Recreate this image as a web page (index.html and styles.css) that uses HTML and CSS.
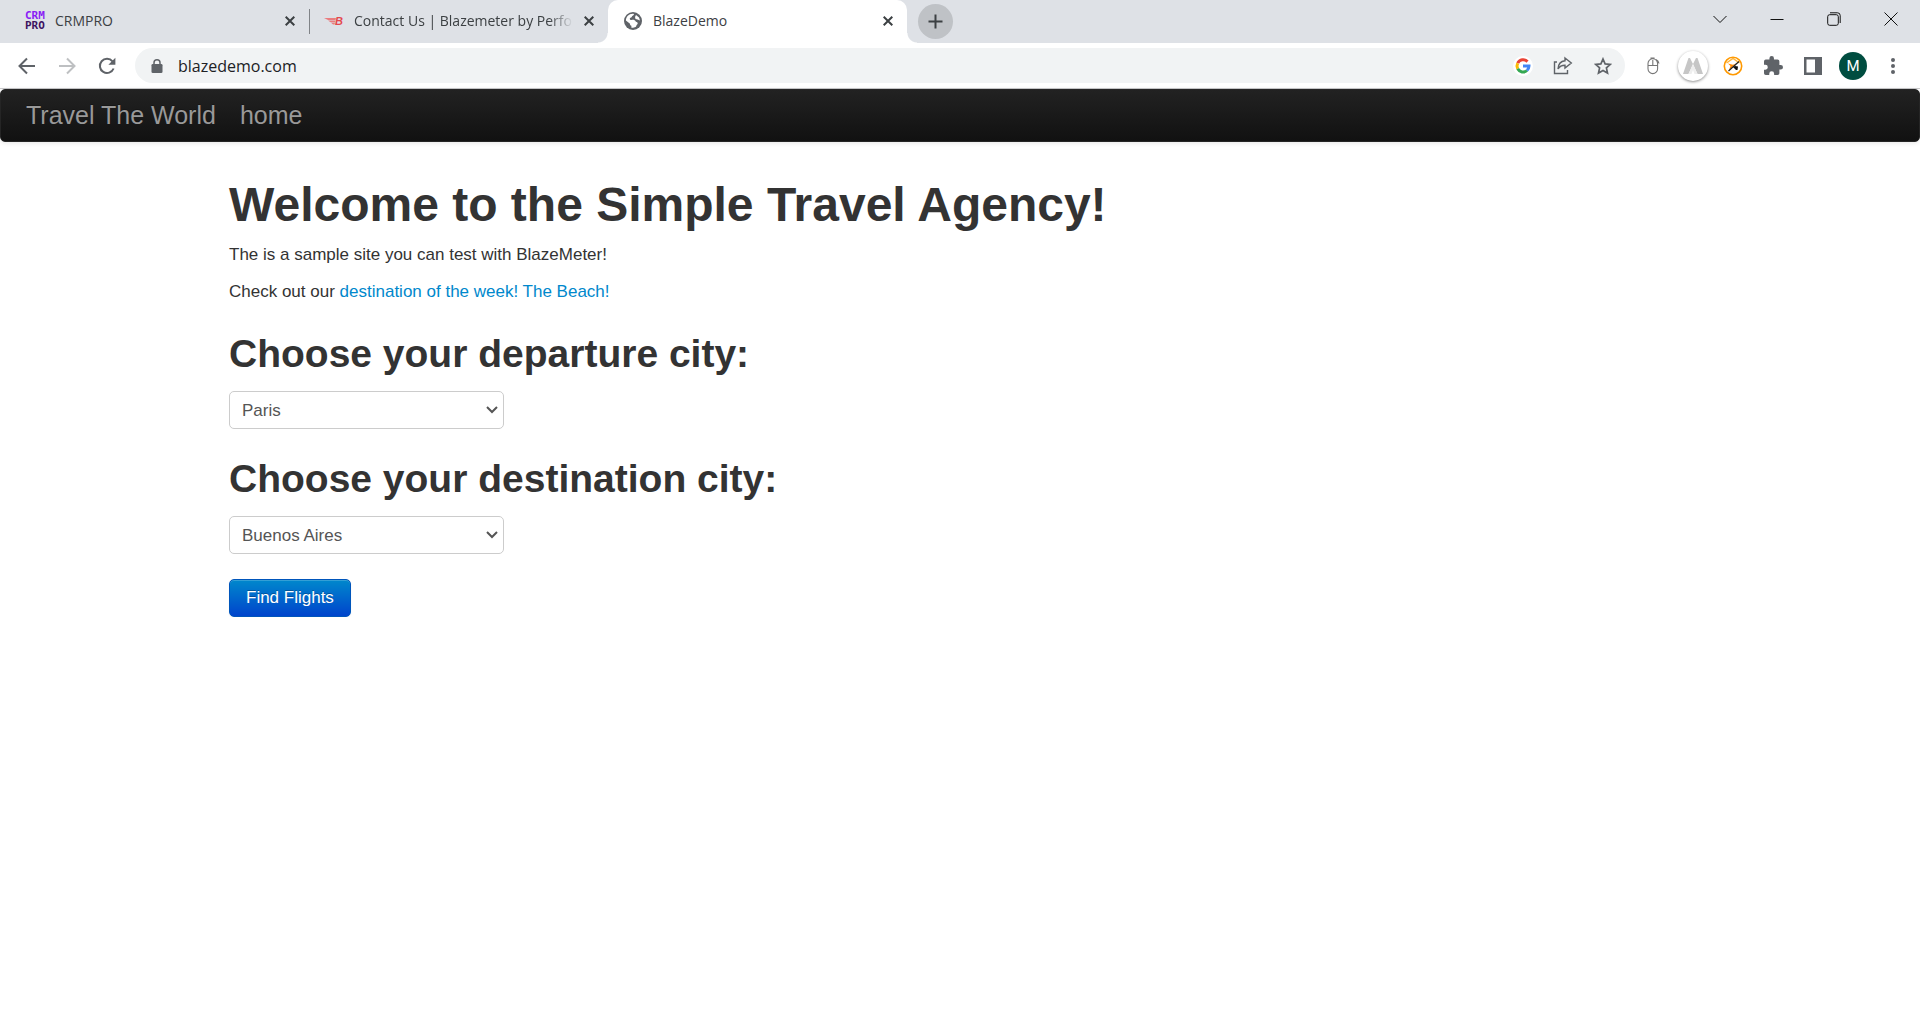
FILE: index.html
```html
<!DOCTYPE html>
<html lang="en">
<head>
<meta charset="utf-8">
<title>BlazeDemo</title>
<link rel="stylesheet" href="styles.css">
</head>
<body>
<header class="browser">
  <div class="tab-strip">
    <div class="tab">
      <span class="favicon favicon-crm"><span class="crm-top">CRM</span><span class="crm-bottom">PRO</span></span>
      <span class="tab-title">CRMPRO</span>
      <button class="tab-close" aria-label="Close CRMPRO"><svg width="10" height="10" viewBox="0 0 10 10"><path d="M.7.7l8.6 8.6M9.3.7L.7 9.3"/></svg></button>
    </div>
    <div class="tab tab-divided">
      <span class="favicon"><svg width="20" height="20" viewBox="0 0 20 20"><path d="M0 7h12l-.5 2H4zM4 9.500h7.500l-.5 1.800H6.500zM7 11.800h4l-.5 1.700H9z" fill="#ea7c7f"/><text x="11" y="14" class="blaze-b">B</text></svg></span>
      <span class="tab-title tab-fade">Contact Us | Blazemeter by Perfo</span>
      <button class="tab-close" aria-label="Close Contact Us"><svg width="10" height="10" viewBox="0 0 10 10"><path d="M.7.7l8.6 8.6M9.3.7L.7 9.3"/></svg></button>
    </div>
    <div class="tab tab-active">
      <span class="favicon"><svg width="20" height="20" viewBox="0 0 20 20"><circle cx="10" cy="10" r="9" fill="#5f6368"/><path d="M10.500 2.800c1 .6.3 1.600-.8 2-.8.3-.6 1.400-1.500 1.600-1.300.3-1.700.9-1.200 2 .5.9 2.500.3 4.100.5 1.600.3 1.200 1.900 2.500 2.100 1.400.3 1.400 1.800.5 2.600-.9.7-.5 1.900-1.600 2.500-1 .6-2.900.9-4.100.7v-2c-1.200-.1-1.400-1.100-1.400-2L2.900 9.500c0-3.700 3.300-7.200 7.600-6.700z" fill="#fff"/><path d="M13 4l3 2.500 1 3-2.500-1-2-.5-.5-2z" fill="#fff"/></svg></span>
      <span class="tab-title">BlazeDemo</span>
      <button class="tab-close" aria-label="Close BlazeDemo"><svg width="10" height="10" viewBox="0 0 10 10"><path d="M.7.7l8.6 8.6M9.3.7L.7 9.3"/></svg></button>
    </div>
    <button class="new-tab" aria-label="New tab"><svg width="15" height="15" viewBox="0 0 15 15"><path d="M7.500.5v14M.5 7.500h14"/></svg></button>
    <div class="window-controls">
      <button class="window-button" aria-label="Search tabs"><svg width="14" height="14" viewBox="0 0 14 14"><path d="M.5 4l6.500 6.500L13.500 4"/></svg></button>
      <button class="window-button" aria-label="Minimize"><svg width="14" height="14" viewBox="0 0 14 14"><path d="M.5 7.500h13"/></svg></button>
      <button class="window-button" aria-label="Restore"><svg width="14" height="14" viewBox="0 0 14 14"><rect x=".7" y="2.700" width="10.600" height="10.600" rx="2"/><path d="M3 .8h7.500a2.700 2.700 0 0 1 2.700 2.700V11"/></svg></button>
      <button class="window-button" aria-label="Close window"><svg width="14" height="14" viewBox="0 0 14 14"><path d="M.5.5l13 13M13.500.5l-13 13"/></svg></button>
    </div>
  </div>
  <div class="toolbar">
    <button class="tool" aria-label="Back"><svg width="18" height="18" viewBox="0 0 18 18" class="line"><path d="M17 9H2M9 1.500L1.500 9 9 16.500"/></svg></button>
    <button class="tool tool-disabled" aria-label="Forward"><svg width="18" height="18" viewBox="0 0 18 18" class="line"><path d="M1 9h15M9 1.500L16.500 9 9 16.500"/></svg></button>
    <button class="tool" aria-label="Reload"><svg width="18" height="18" viewBox="0 0 18 18"><path d="M15.600 11.500A7.100 7.100 0 1 1 14.500 4.400" fill="none" stroke="#5f6368" stroke-width="2"/><path d="M17.400.8v7h-7z" fill="#5f6368"/></svg></button>
    <div class="address">
      <svg class="lock" width="12" height="14" viewBox="0 0 12 14"><path d="M3 6V3.800a3 3 0 0 1 6 0V6" fill="none" stroke="#5f6368" stroke-width="1.500"/><rect x=".5" y="5" width="11" height="9" rx="1.300" fill="#5f6368"/></svg>
      <input class="url" type="text" value="blazedemo.com" aria-label="Address">
      <button class="tool" aria-label="Google"><svg width="20" height="20" viewBox="0 0 20 20"><circle cx="10" cy="10" r="10" fill="#fff"/><g fill="none" stroke-width="3"><path d="M14.500 5.600A6 6 0 0 0 4.700 7.200" stroke="#ea4335"/><path d="M4.700 7.200a6 6 0 0 0 0 5.600" stroke="#fbbc05"/><path d="M4.700 12.800a6 6 0 0 0 9.300 1.700" stroke="#34a853"/><path d="M14 14.500a6 6 0 0 0 2-4.400H10" stroke="#4285f4"/></g></svg></button>
      <button class="tool" aria-label="Share"><svg width="20" height="20" viewBox="0 0 20 20" fill="none" stroke="#5f6368" stroke-width="1.400"><path d="M4 6H1.500v11.500h13V14"/><path d="M12 2l6.300 5-6.300 5V9.300C8.500 9.300 6.500 10.500 5 13c.3-5 3-7.800 7-8.200z"/></svg></button>
      <button class="tool" aria-label="Bookmark"><svg width="18" height="18" viewBox="0 0 18 18" fill="none" stroke="#5f6368" stroke-width="1.700"><path d="M9 2l2.100 4.900 5.200.5-3.900 3.500 1.100 5.200L9 13.400l-4.500 2.700 1.100-5.200-3.900-3.500 5.200-.5z"/></svg></button>
    </div>
    <button class="tool" aria-label="Mouse extension"><svg width="18" height="18" viewBox="0 0 18 18" fill="none" stroke="#777" stroke-width="1.100"><path d="M4 8.500V6.500a4.800 4.800 0 0 1 9.600 0v5.300a4.800 4.800 0 0 1-9.600 0zM4 8.500h9.600M8.800 8.500V3M7 2.500V1h3v1.500M12 2.500c1.700.8 2.700 2.200 3 4"/></svg></button>
    <button class="tool" aria-label="Recorder extension"><span class="disc"><svg width="20" height="16" viewBox="0 0 20 16"><path d="M0 16L5.500 0H7l3 6 3-6h1.500L20 16h-5.500L10 6 5.500 16z" fill="#c6c6c6"/><path d="M5.500 16L10 6l4.500 10h-3L10 12l-1.500 4z" fill="#eee"/></svg></span></button>
    <button class="tool" aria-label="Testing extension"><svg width="20" height="20" viewBox="0 0 20 20"><circle cx="10" cy="10" r="8.700" fill="#fff" stroke="#f90" stroke-width="1.600"/><path d="M3.500 7L10 2.500 16.500 7" fill="none" stroke="#fdb53e" stroke-width="1.500"/><path d="M5 7.500l5 1.300 3-1.300-7 6.500 1.500-4z" fill="#f80"/><path d="M16 5.500L5.500 15" stroke="#222" stroke-width="1.200"/><path d="M10 11l2-1 3 .5-.5 3.500h-1.500z" fill="#111"/></svg></button>
    <button class="tool" aria-label="Extensions"><svg width="19" height="19" viewBox="2 1 21 21"><path d="M20.500 11H19V7a2 2 0 0 0-2-2h-4V3.500a2.500 2.500 0 0 0-5 0V5H4a2 2 0 0 0-2 2v3.800h1.500a2.700 2.700 0 0 1 0 5.400H2V20a2 2 0 0 0 2 2h3.800v-1.500a2.700 2.700 0 0 1 5.400 0V22H17a2 2 0 0 0 2-2v-4h1.500a2.500 2.500 0 0 0 0-5z" fill="#5f6368"/></svg></button>
    <button class="tool" aria-label="Side panel"><svg width="18" height="18" viewBox="0 0 18 18"><path d="M0 0h18v18H0zM2.500 2.500v13H11v-13z" fill="#5f6368" fill-rule="evenodd"/></svg></button>
    <button class="tool" aria-label="Profile"><span class="avatar">M</span></button>
    <button class="tool" aria-label="Menu"><svg width="4" height="16" viewBox="0 0 4 16" fill="#5f6368"><circle cx="2" cy="2" r="2"/><circle cx="2" cy="8" r="2"/><circle cx="2" cy="14" r="2"/></svg></button>
  </div>
</header>
<nav class="navbar">
  <a class="brand" href="#">Travel The World</a>
  <a class="brand" href="#">home</a>
</nav>
<main class="container">
  <h1>Welcome to the Simple Travel Agency!</h1>
  <p>The is a sample site you can test with BlazeMeter!</p>
  <p>Check out our <a href="#">destination of the week! The Beach!</a></p>
  <form class="flights">
    <h2><label for="from">Choose your departure city:</label></h2>
    <select id="from"><option>Paris</option><option>Boston</option></select>
    <h2><label for="to">Choose your destination city:</label></h2>
    <select id="to"><option>Buenos Aires</option><option>London</option></select>
    <button class="submit" type="button">Find Flights</button>
  </form>
</main>
</body>
</html>
```
FILE: styles.css
```css
* { box-sizing: border-box; }
body {
  margin: 0;
  background: #fff;
  color: #333;
  font: 17px/25px "Liberation Sans", Arial, sans-serif;
}
button {
  padding: 0;
  border: 0;
  background: none;
  font: inherit;
}
.browser {
  border-bottom: 1px solid #c9c9cb;
  font-family: "Open Sans", "Noto Sans", sans-serif;
}
.tab-strip {
  display: flex;
  height: 43px;
  padding-left: 10px;
  background: #dee1e6;
}
.tab {
  position: relative;
  display: flex;
  align-items: center;
  width: 299px;
  padding: 0 9px 2px 15px;
  color: #3c4043;
  font-size: 14px;
}
.tab-divided::before {
  content: "";
  position: absolute;
  left: 0;
  top: 9px;
  width: 1px;
  height: 25px;
  background: #808387;
}
.tab-active {
  border-radius: 10px 10px 0 0;
  background: #fff;
}
.tab-active::before,
.tab-active::after {
  content: "";
  position: absolute;
  bottom: 0;
  width: 10px;
  height: 10px;
}
.tab-active::before {
  right: 100%;
  background: radial-gradient(circle at 0 0, transparent 9px, #fff 10px);
}
.tab-active::after {
  left: 100%;
  background: radial-gradient(circle at 100% 0, transparent 9px, #fff 10px);
}
.favicon {
  width: 20px;
  height: 20px;
  margin-right: 10px;
}
.favicon svg { display: block; }
.favicon-crm {
  font: bold 11px/10px "DejaVu Sans Mono", monospace;
}
.favicon-crm span { display: block; }
.crm-top { color: #8a1cf5; }
.crm-bottom { color: #3c1361; }
.blaze-b {
  font: italic bold 11px "Liberation Sans", sans-serif;
  fill: #e4484d;
}
.tab-title {
  flex: 1;
  margin-right: 6px;
  white-space: nowrap;
}
.tab-fade {
  -webkit-mask-image: linear-gradient(to left, transparent, #000 24px);
  mask-image: linear-gradient(to left, transparent, #000 24px);
}
.tab-close {
  display: grid;
  place-items: center;
  width: 20px;
  height: 20px;
}
.tab-close svg, .new-tab svg {
  fill: none;
  stroke: #3c4043;
  stroke-width: 2;
}
.new-tab {
  display: grid;
  place-items: center;
  width: 35px;
  height: 35px;
  margin: 4px 0 0 11px;
  border-radius: 50%;
  background: #bfc2c6;
}
.window-controls {
  display: flex;
  height: 37px;
  margin-left: auto;
  padding-right: 1px;
}
.window-button {
  display: grid;
  place-items: center;
  width: 57px;
}
.window-button svg { fill: none; stroke: #111; }
.toolbar {
  display: flex;
  align-items: center;
  height: 45px;
  padding: 0 7px;
}
.tool {
  display: grid;
  flex: none;
  place-items: center;
  width: 40px;
  height: 34px;
}
.tool-disabled { opacity: .4; }
.line {
  fill: none;
  stroke: #5f6368;
  stroke-width: 2;
}
.address {
  display: flex;
  flex: 1;
  align-items: center;
  height: 35px;
  margin: 0 8px;
  padding: 0 2px 0 16px;
  border-radius: 18px;
  background: #f1f3f4;
}
.lock { flex: none; }
.url {
  flex: 1;
  min-width: 0;
  margin-left: 15px;
  padding: 0;
  border: 0;
  background: none;
  color: #202124;
  font: 16px/24px "Open Sans", "Noto Sans", sans-serif;
}
.disc {
  display: grid;
  place-items: center;
  width: 30px;
  height: 30px;
  border-radius: 50%;
  background: #fff;
  box-shadow: 0 1px 3px rgba(0, 0, 0, .45);
}
.avatar {
  display: grid;
  place-items: center;
  width: 28px;
  height: 28px;
  border-radius: 50%;
  background: #004d40;
  color: #fff;
  font: 15px/28px Roboto, sans-serif;
}
.navbar {
  display: flex;
  height: 53px;
  padding-left: 13px;
  border: 1px solid #252525;
  border-radius: 5px;
  background: linear-gradient(#222, #111);
  box-shadow: 0 1px 5px rgba(0, 0, 0, .1);
}
.brand {
  padding: 13px 12px;
  color: #999;
  font-size: 25px;
  line-height: 25px;
  text-decoration: none;
  text-shadow: 0 -1px 0 rgba(0, 0, 0, .25);
}
.container {
  max-width: 1462px;
  margin: 0 auto;
  padding-top: 38px;
}
h1, h2, p { margin: 0 0 12px; }
h1, h2 { line-height: 50px; }
h1 { font-size: 48px; }
h2 { font-size: 39px; }
.container a { color: #08c; text-decoration: none; }
.flights {
  display: flex;
  flex-direction: column;
  align-items: flex-start;
  padding-top: 13px;
}
select {
  appearance: none;
  width: 275px;
  height: 38px;
  margin-bottom: 25px;
  padding: 5px 24px 5px 12px;
  border: 1px solid #ccc;
  border-radius: 5px;
  background: #fff url("data:image/svg+xml,%3Csvg xmlns='http://www.w3.org/2000/svg' width='12' height='8'%3E%3Cpath d='M1 1l5 5 5-5' fill='none' stroke='%23555' stroke-width='2'/%3E%3C/svg%3E") no-repeat right 5px center;
  color: #555;
  font: 17px/25px "Liberation Sans", Arial, sans-serif;
}
.submit {
  height: 38px;
  padding: 0 16px 2px;
  border: 1px solid #0055bb;
  border-radius: 5px;
  background: linear-gradient(#08c, #04c);
  box-shadow: inset 0 1px 0 rgba(255, 255, 255, .2), 0 1px 2px rgba(0, 0, 0, .05);
  color: #fff;
  text-shadow: 0 -1px 0 rgba(0, 0, 0, .25);
}
```
